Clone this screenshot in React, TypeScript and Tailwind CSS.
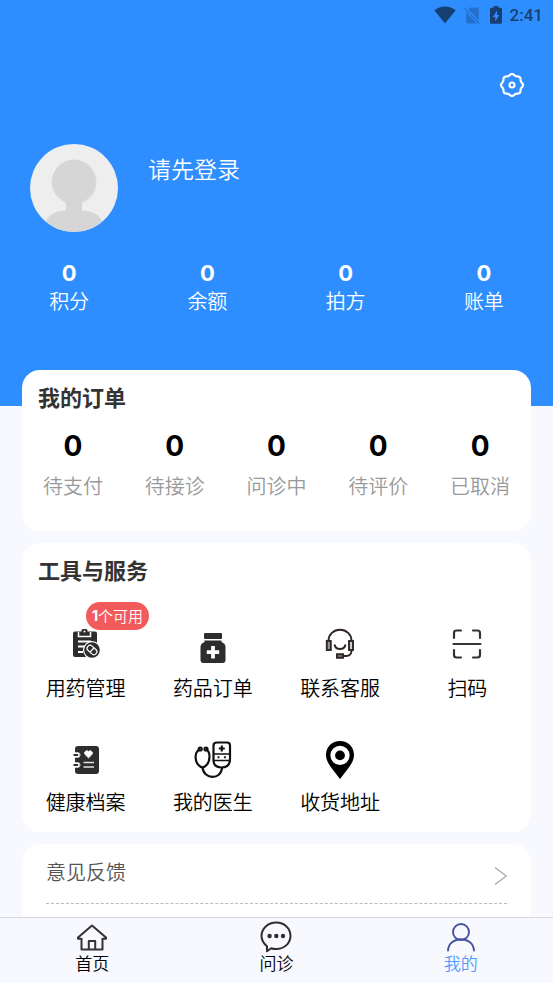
import React from 'react';

interface Stat {
    label: string;
    value: number;
}

interface Tool {
    label: string;
    icon: React.ReactNode;
    badge?: string;
}

interface Tab {
    label: string;
    icon: React.ReactNode;
    active?: boolean;
}

const WifiIcon = () => (
    <svg width="22" height="18" viewBox="0 0 22 18" fill="currentColor">
        <path d="M0.3 4.2C3.2 1.7 7 0.4 11 0.4s7.8 1.3 10.7 3.8L11 17.4z" />
    </svg>
);

const NoSimIcon = () => (
    <svg width="16" height="17" viewBox="0 0 16 17">
        <path d="M6 0.4h7.5c0.8 0 1.3 0.5 1.3 1.3v11.8L4.4 2.6z" fill="currentColor" />
        <path d="M2.2 5L13 16.4H3.4c-0.8 0-1.2-0.5-1.2-1.2z" fill="currentColor" />
        <path d="M0.5 1.2L15.3 16.5" stroke="currentColor" strokeWidth="1.2" />
    </svg>
);

const BatteryIcon = () => (
    <svg width="12" height="18" viewBox="0 0 12 18">
        <path
            fillRule="evenodd"
            fill="currentColor"
            d="M3.6 0h4.8v1.8h2.2c0.8 0 1.4 0.6 1.4 1.4v13.2c0 0.8-0.6 1.4-1.4 1.4H1.4C0.6 17.8 0 17.2 0 16.4V3.2c0-0.8 0.6-1.4 1.4-1.4h2.2zM7 4.6L2.9 10.9h2.4v4.3L9.2 9H7z"
        />
    </svg>
);

// Eight-lobed outline around the centre of a 26x26 box
const gearPath =
    Array.from({ length: 96 }, (_, i) => {
        const a = (i / 96) * Math.PI * 2;
        const r = 10.3 + 0.7 * Math.cos(8 * a);
        return `${i === 0 ? 'M' : 'L'}${(13 + r * Math.cos(a)).toFixed(2)} ${(13 + r * Math.sin(a)).toFixed(2)}`;
    }).join('') + 'Z';

const GearIcon = () => (
    <svg width="26" height="26" viewBox="0 0 26 26" fill="none" stroke="currentColor" strokeWidth="2.2" strokeLinejoin="round">
        <path d={gearPath} />
        <circle cx="13" cy="13" r="2.5" />
    </svg>
);

const Avatar = () => (
    <svg className="size-22 shrink-0 rounded-full" viewBox="0 0 88 88">
        <rect width="88" height="88" fill="#eeeeee" />
        <path d="M36 56h16v10.5c10 0 17.5 4 20.5 11.5V88h-57V78C19 70.5 26 66.5 36 66.5z" fill="#d6d6d6" />
        <ellipse cx="44" cy="38.5" rx="22.5" ry="22" fill="#cccccc" opacity="0.4" />
        <circle cx="44" cy="37.5" r="22" fill="#d6d6d6" />
    </svg>
);

const MedicationIcon = () => (
    <svg width="30" height="32" viewBox="0 0 30 32">
        <path d="M4 3.5h6.5v-1q0-1.5 1.5-1.5h3q1.5 0 1.5 1.5v1H24q2 0 2 2V27q0 2-2 2H4q-2 0-2-2V5.500q0-2 2-2z" fill="#2d2d2d" />
        <path d="M7.5 4v4.500h12V4" fill="none" stroke="#fff" strokeWidth="1.5" />
        <circle cx="13.500" cy="3.600" r="1" fill="#fff" />
        <path d="M7 13.500h13M7 18.500h7M7 24h5" stroke="#fff" strokeWidth="2" />
        <circle cx="21" cy="22" r="9" fill="#fff" />
        <circle cx="21" cy="22" r="7.800" fill="#2d2d2d" />
        <g transform="rotate(42 21 22)" fill="none" stroke="#fff" strokeWidth="1.2">
            <rect x="15.500" y="19" width="11" height="6" rx="3" />
            <path d="M21 19v6" />
        </g>
    </svg>
);

const JarIcon = () => (
    <svg width="26" height="40" viewBox="0 -8 26 40">
        <rect x="4" y="1" width="18" height="6" rx="1" fill="#2d2d2d" />
        <path d="M4.5 8.5h17V10q4 1.500 4 5V28q0 3-3 3H3.500q-3 0-3-3V15q0-3.500 4-5z" fill="#2d2d2d" />
        <path d="M13 14v12.500M6.800 20.200h12.400" stroke="#fff" strokeWidth="3.8" />
    </svg>
);

const HeadsetIcon = () => (
    <svg width="30" height="32" viewBox="0 0 30 32" fill="none" stroke="#2f2424" strokeWidth="1.9">
        <path d="M3.5 13V12.5a11.5 10.8 0 0 1 23 0V13" />
        <rect x="1.8" y="13" width="4" height="9" fill="#999" />
        <rect x="24" y="13" width="4" height="9" fill="#ccc" />
        <path d="M9.5 16.500c1 6 10 6 11 0M26.500 22.500q0 5.500-5.500 5.500h-3" />
        <rect x="12" y="26.200" width="6" height="3.600" fill="#777" />
    </svg>
);

const ScanIcon = () => (
    <svg width="30" height="30" viewBox="0 0 30 30" fill="none" stroke="#333" strokeWidth="2.2" strokeLinecap="round">
        <path d="M2 9V4q0-2.500 2.500-2.500H9M21 1.500h4.500Q28 1.500 28 4v5M2 21v5q0 2.500 2.500 2.500H9M21 28.500h4.500q2.500 0 2.500-2.500v-5M1.500 15h27" />
    </svg>
);

const RecordIcon = () => (
    <svg width="28" height="34" viewBox="0 -4 28 34">
        <rect x="3" y="1" width="24" height="28" rx="3" fill="#2d2d2d" />
        <path d="M16.5 12.800l-3.300-3.200a2.200 2.200 0 0 1 3.300-3 2.200 2.200 0 0 1 3.300 3z" fill="#fff" stroke="#fff" />
        <path d="M11.5 17.500h10.500M11.500 22h10.500" stroke="#e4e4e4" strokeWidth="1.4" />
        <path d="M2 8h5v4H2zM2 18h5v4H2z" fill="#fff" />
        <path d="M1.5 10h4.500M1.500 20h4.500" stroke="#2d2d2d" strokeWidth="1.8" />
        <path d="M3 7.800h3q2 0 2 2.200t-2 2.200H3M3 17.800h3q2 0 2 2.200t-2 2.200H3" fill="none" stroke="#fff" strokeWidth="1" />
    </svg>
);

const StethoscopeIcon = () => (
    <svg width="38" height="42" viewBox="0 -4 38 42" fill="none" stroke="#111" strokeWidth="2.2">
        <path d="M6 8.500C0.500 10.500 0.500 19 4 23.500q4.500 5.500 9 0c3.500-4.500 3.500-13-1-15" />
        <circle cx="6.200" cy="8" r="1.500" />
        <circle cx="12" cy="8" r="1.500" />
        <path d="M8.500 26.500C10 39 27 39 28 27" />
        <path d="M23 1.500h10q3 0 3 3V18q0 8.500-8.500 8.500T19.500 18V4.500q0-3 3.500-3z" />
        <path d="M19.500 13h16.500M20 19.500h16" strokeWidth="1.5" />
        <path d="M27.800 4.500v6M24.800 7.500h6" />
        <path d="M24.500 15.200v2M31 15.200v2" strokeWidth="1.8" />
    </svg>
);

const PinIcon = () => (
    <svg width="30" height="42" viewBox="0 -4 30 42">
        <path
            fillRule="evenodd"
            fill="#000"
            d="M15 0C7 0 1 6 1 13.8 1 19 3.5 23 6.5 27L15 38l8.5-11c3-4 5.500-8 5.500-13.200C29 6 23 0 15 0zm0 4.800a9.600 9.600 0 1 1 0 19.200 9.600 9.600 0 0 1 0-19.200z"
        />
        <circle cx="15" cy="14.400" r="4.900" fill="#000" />
    </svg>
);

const HomeIcon = () => (
    <svg width="32" height="32" viewBox="0 0 32 32" fill="none" stroke="#333" strokeWidth="2" strokeLinejoin="round">
        <path d="M16 4.500L2 16.500v1.200h3.500V28.500h21V17.700H30v-1.200z" />
        <path d="M12.800 28V20h6.400v8" />
    </svg>
);

const ChatIcon = () => (
    <svg width="32" height="32" viewBox="0 0 32 32">
        <path
            d="M16.2 1.5C24.5 1.5 30.5 7.5 30.5 14.8S24.5 28 16.2 28c-2 0-3.5-0.200-5-0.800L7 30.300V25.200C3.500 22.500 1.500 19 1.500 14.800 1.500 7.500 8 1.500 16.200 1.500z"
            fill="none"
            stroke="#2f2f2f"
            strokeWidth="2"
            strokeLinejoin="round"
        />
        <g fill="#2f2f2f">
            <circle cx="9.600" cy="15" r="2.200" />
            <circle cx="16.300" cy="15" r="2.200" />
            <circle cx="23" cy="15" r="2.200" />
        </g>
    </svg>
);

const UserIcon = () => (
    <svg width="32" height="32" viewBox="0 0 32 32" fill="none" stroke="#4652a0" strokeWidth="1.9" strokeLinecap="round">
        <circle cx="16" cy="11" r="8" />
        <path d="M3 29.500C4 14.500 28 14.500 29 29.500" />
    </svg>
);

const accountStats: Stat[] = [
    { label: '积分', value: 0 },
    { label: '余额', value: 0 },
    { label: '拍方', value: 0 },
    { label: '账单', value: 0 },
];

const orderStats: Stat[] = [
    { label: '待支付', value: 0 },
    { label: '待接诊', value: 0 },
    { label: '问诊中', value: 0 },
    { label: '待评价', value: 0 },
    { label: '已取消', value: 0 },
];

const tools: Tool[] = [
    { label: '用药管理', icon: <MedicationIcon />, badge: '个可用' },
    { label: '药品订单', icon: <JarIcon /> },
    { label: '联系客服', icon: <HeadsetIcon /> },
    { label: '扫码', icon: <ScanIcon /> },
    { label: '健康档案', icon: <RecordIcon /> },
    { label: '我的医生', icon: <StethoscopeIcon /> },
    { label: '收货地址', icon: <PinIcon /> },
];

const tabs: Tab[] = [
    { label: '首页', icon: <HomeIcon /> },
    { label: '问诊', icon: <ChatIcon /> },
    { label: '我的', icon: <UserIcon />, active: true },
];

const StatusBar = () => (
    <div className="flex h-[30px] items-center justify-end pr-2.5 text-[#173f72]">
        <WifiIcon />
        <span className="ml-2 text-[#2470cc]">
            <NoSimIcon />
        </span>
        <span className="ml-2.5">
            <BatteryIcon />
        </span>
        <span className="ml-2 font-[Roboto] text-[17px] leading-5 font-medium">2:41</span>
    </div>
);

const Header = () => (
    <header className="bg-[#2e8eff] pb-[91px] text-white">
        <StatusBar />
        <div className="flex justify-end pt-[42px] pr-7">
            <button type="button" aria-label="设置">
                <GearIcon />
            </button>
        </div>
        <div className="mt-[46px] flex items-start gap-[30px] pl-[30px]">
            <Avatar />
            <button type="button" className="mt-1.5 text-[23px] leading-9 font-[350]">请先登录</button>
        </div>
        <div className="mt-[27px] grid grid-cols-4">
            {accountStats.map((item) => (
                <button type="button" key={item.label} className="flex flex-col items-center">
                    <span className="font-[Inter] text-[22px] leading-7 font-bold">{item.value}</span>
                    <span className="text-[20px] leading-7 font-[350]">{item.label}</span>
                </button>
            ))}
        </div>
    </header>
);

const OrdersCard = () => (
    <section className="rounded-[18px] bg-white pt-2.5 pb-[29px]">
        <h2 className="px-4 text-[22px] leading-8 font-bold text-[#333]">我的订单</h2>
        <div className="mt-3.5 grid grid-cols-5">
            {orderStats.map((item) => (
                <button type="button" key={item.label} className="flex flex-col items-center">
                    <span className="font-[Inter] text-[28px] leading-10 font-bold text-black">{item.value}</span>
                    <span className="mt-1 text-[20px] leading-8 font-[350] text-[#999]">{item.label}</span>
                </button>
            ))}
        </div>
    </section>
);

const ToolsCard = () => (
    <section className="rounded-[18px] bg-white pt-2.5 pb-3.5">
        <h2 className="px-4 text-[22px] leading-8 font-bold text-[#333]">工具与服务</h2>
        <div className="mt-[37px] grid grid-cols-4 gap-y-8">
            {tools.map((tool) => (
                <button type="button" key={tool.label} className="relative flex flex-col items-center">
                    <span className="flex h-11 items-center">{tool.icon}</span>
                    <span className="mt-1.5 text-[20px] leading-8 font-[350] text-black">{tool.label}</span>
                    {tool.badge && (
                        <span className="absolute -top-5 left-1/2 flex h-7 items-center rounded-full bg-[#f15b5b] px-1.5 text-[15px] font-[350] whitespace-nowrap text-white">
                            <b className="font-[Inter] font-bold">1</b>
                            {tool.badge}
                        </span>
                    )}
                </button>
            ))}
        </div>
    </section>
);

const FeedbackCard = () => (
    <section className="rounded-t-[18px] bg-white px-6 pb-8">
        <a href="#feedback" className="flex h-15 items-center justify-between border-b border-dashed border-[#bbb] text-[20px] leading-8 font-[350] text-[#555]">
            <span className="pb-1">意见反馈</span>
            <svg className="mt-1" width="14" height="20" viewBox="0 0 14 20" fill="none" stroke="#aaa" strokeWidth="1.3">
                <path d="M2 1.5L13.3 10L2 18.5" />
            </svg>
        </a>
    </section>
);

const TabBar = () => (
    <nav className="grid shrink-0 grid-cols-3 border-t border-[#d8d8dc] bg-[#f8f8ff] pt-[3px] pb-2.5">
        {tabs.map((tab) => (
            <a key={tab.label} href="#tab" className="flex flex-col items-center">
                {tab.icon}
                <span className={`text-[17px] leading-5 font-[350] ${tab.active ? 'text-[#4a9cff]' : 'text-black'}`}>{tab.label}</span>
            </a>
        ))}
    </nav>
);

const App: React.FC = () => {
    return (
        <div className="flex h-screen flex-col bg-[#f8f8ff] font-['Noto_Sans_CJK_SC',sans-serif]">
            <main className="min-h-0 flex-1 overflow-y-auto [scrollbar-width:none]">
                <Header />
                <div className="relative -mt-9 flex flex-col gap-3 px-[22px]">
                    <OrdersCard />
                    <ToolsCard />
                    <FeedbackCard />
                </div>
            </main>
            <TabBar />
        </div>
    );
};

export default App;
